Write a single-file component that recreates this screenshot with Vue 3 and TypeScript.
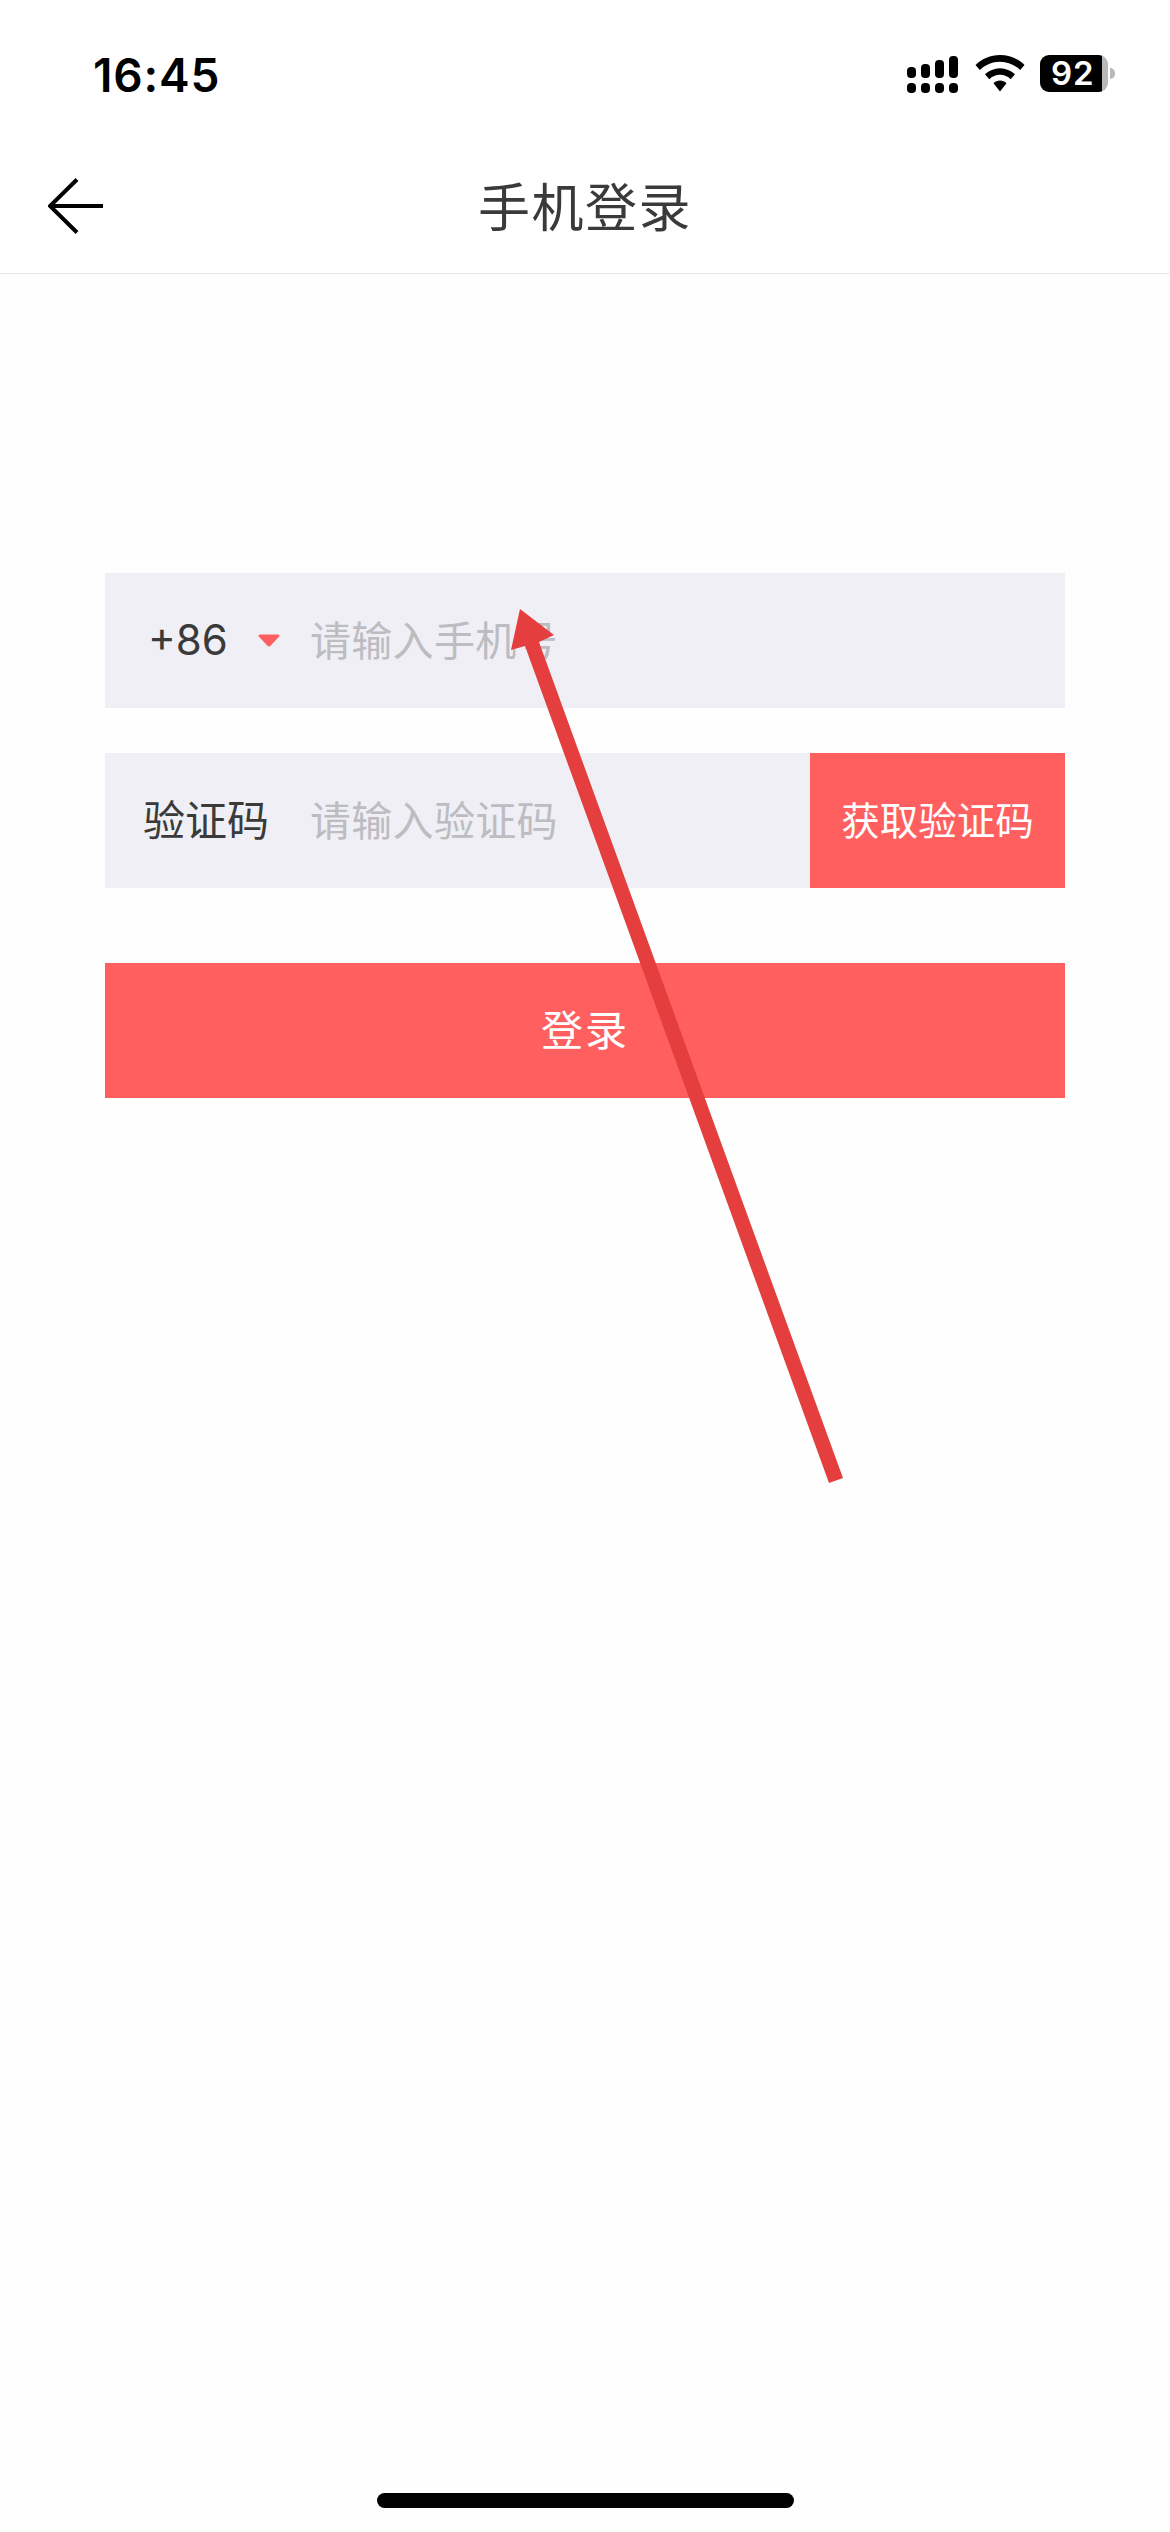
<script setup lang="ts">
const signalBars: { x: number; y: number; h: number }[] = [
  { x: 907, y: 67, h: 11 },
  { x: 921, y: 64, h: 14 },
  { x: 935, y: 60, h: 18 },
  { x: 949, y: 56, h: 22 },
]
</script>

<template>
  <div class="page">
    <div class="status">
      <span class="time">16:45</span>
      <div class="status-icons">
        <svg class="signal" width="52" height="38" viewBox="907 56 52 38" aria-hidden="true">
          <g v-for="bar in signalBars" :key="bar.x">
            <rect :x="bar.x" :y="bar.y" width="9" :height="bar.h" rx="4" fill="#000" />
            <rect :x="bar.x" y="83" width="9" height="10" rx="4" fill="#000" />
          </g>
        </svg>
        <svg class="wifi" width="50" height="37" viewBox="0 0 50 37" aria-hidden="true">
          <path d="M25 0C15.500 0 7 3.700 0.500 10L4.800 15C10.200 9.800 17.200 6.700 25 6.700C32.800 6.700 39.800 9.800 45.200 15L49.500 10C43 3.700 34.500 0 25 0Z" fill="#000" />
          <path d="M25 13.200C19.200 13.200 14 15.500 10 19.300L14.300 24.200C17.100 21.500 20.800 19.800 25 19.800C29.200 19.800 32.900 21.500 35.700 24.200L40 19.300C36 15.500 30.800 13.200 25 13.200Z" fill="#000" />
          <path d="M25 25.500C22.500 25.500 20.200 26.500 18.500 28.200L25 36.500L31.500 28.200C29.800 26.500 27.500 25.500 25 25.500Z" fill="#000" />
        </svg>
        <div class="battery">
          <div class="battery-body"><span class="battery-level">92</span></div>
          <div class="battery-nub"></div>
        </div>
      </div>
    </div>

    <header class="nav">
      <svg class="back" width="56" height="56" viewBox="0 0 56 56" aria-hidden="true">
        <path d="M55 28H2M29 1.500L2 28L29 54.500" fill="none" stroke="#000" stroke-width="4" />
      </svg>
      <h1 class="title">手机登录</h1>
    </header>

    <main class="form">
      <div class="field">
        <div class="prefix prefix-code">
          <span>+86</span>
          <svg class="caret" width="22" height="13" viewBox="0 0 22 13" aria-hidden="true">
            <path d="M2 0.500H20C21.500 0.500 22 1.800 21 2.800L12.500 11.800C11.700 12.700 10.300 12.700 9.500 11.800L1 2.800C0 1.800 0.500 0.500 2 0.500Z" fill="#ff5f5f" />
          </svg>
        </div>
        <span class="placeholder">请输入手机号</span>
      </div>
      <div class="field">
        <div class="prefix prefix-label"><span>验证码</span></div>
        <span class="placeholder">请输入验证码</span>
        <button class="code-btn" type="button">获取验证码</button>
      </div>
      <button class="login-btn" type="button">登录</button>
    </main>

    <div class="home-indicator"></div>

    <svg class="annotation" width="1170" height="2532" viewBox="0 0 1170 2532" aria-hidden="true">
      <path d="M829 1483L843 1478L539 642L554 635L520 609L511 650L525 646Z" fill="#e53e3e" />
    </svg>
  </div>
</template>

<style>
html,
body {
  margin: 0;
  background: #fff;
}
</style>

<style scoped>
.page {
  position: relative;
  width: 1170px;
  height: 2532px;
  display: flex;
  flex-direction: column;
  overflow: hidden;
  background: #fefefe;
  font-family: "Noto Sans CJK SC", "Noto Sans", sans-serif;
}
.status {
  height: 150px;
  box-sizing: border-box;
  padding: 45px 55px 0 93px;
  display: flex;
  justify-content: space-between;
  align-items: flex-start;
  background: #fff;
}
.time {
  font-family: Inter, sans-serif;
  font-size: 46px;
  line-height: 60px;
  font-weight: 600;
  color: #000;
  letter-spacing: 0.8px;
}
.status-icons {
  display: flex;
  align-items: flex-start;
  padding-top: 10px;
}
.signal {
  display: block;
  margin-top: 1px;
}
.wifi {
  display: block;
  margin-left: 16px;
}
.battery {
  display: flex;
  align-items: center;
  margin-left: 15px;
}
.battery-body {
  width: 68px;
  height: 37px;
  box-sizing: border-box;
  border-radius: 9px;
  background: linear-gradient(to right, #000 62px, #b8b8b8 62px);
  display: flex;
  align-items: center;
  padding-left: 11px;
}
.battery-level {
  font-family: Inter, sans-serif;
  font-size: 33px;
  line-height: 37px;
  font-weight: 600;
  color: #fff;
  letter-spacing: 1px;
}
.battery-nub {
  width: 5px;
  height: 11px;
  margin-left: 2px;
  border-radius: 0 5px 5px 0;
  background: #b8b8b8;
}
.nav {
  position: relative;
  height: 124px;
  flex: none;
  box-sizing: border-box;
  padding-bottom: 14px;
  border-bottom: 1px solid #e8e8e8;
  background: #fff;
  display: flex;
  align-items: center;
  justify-content: center;
}
.back {
  position: absolute;
  left: 48px;
  top: 28px;
}
.title {
  margin: 0;
  font-size: 52px;
  line-height: 72px;
  font-weight: 400;
  color: #3a3a3a;
  letter-spacing: 1.500px;
}
.form {
  margin: 299px 105px 0;
  display: flex;
  flex-direction: column;
  gap: 45px;
}
.field {
  height: 135px;
  display: flex;
  align-items: center;
  background: #efeff5;
}
.prefix {
  width: 205px;
  flex: none;
  box-sizing: border-box;
  display: flex;
  align-items: center;
  padding-bottom: 6px;
  font-size: 42px;
  line-height: 60px;
  color: #3a3a3a;
}
.prefix-code {
  padding-left: 43px;
  padding-bottom: 2px;
  font-family: Inter, sans-serif;
  font-size: 42px;
  font-weight: 400;
}
.prefix-label {
  padding-left: 38px;
}
.caret {
  margin-left: 30px;
  margin-top: 2px;
  flex: none;
}
.placeholder {
  flex: 1;
  padding-bottom: 6px;
  font-size: 41px;
  line-height: 60px;
  color: #bcbcc1;
  letter-spacing: 0.300px;
}
.code-btn,
.login-btn {
  border: 0;
  background: #ff5f5f;
  color: #fff;
  font-family: inherit;
  font-weight: 400;
}
.code-btn {
  width: 255px;
  height: 135px;
  flex: none;
  padding: 0 0 6px;
  font-size: 38.500px;
}
.login-btn {
  height: 135px;
  margin-top: 30px;
  padding: 0 0 6px;
  font-size: 42px;
  letter-spacing: 2px;
}
.home-indicator {
  width: 417px;
  height: 15px;
  margin: auto auto 24px;
  border-radius: 8px;
  background: #000;
}
.annotation {
  position: absolute;
  left: 0;
  top: 0;
  pointer-events: none;
}
</style>
